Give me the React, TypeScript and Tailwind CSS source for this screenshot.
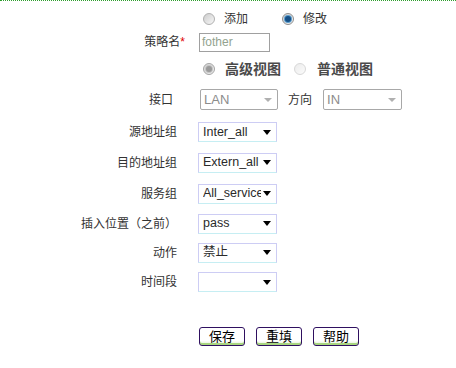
import React from "react";

const font = { fontFamily: '"Liberation Sans", Arial, "Noto Sans CJK SC", sans-serif' };

function Radio({ checked, disabled }: { checked?: boolean; disabled?: boolean }) {
  const ring = disabled
    ? checked
      ? "border-[#a4a4a4] from-[#d6d6d6] to-[#f2f2f2]"
      : "border-[#d8d8d8] from-[#ececec] to-[#fbfbfb]"
    : checked
      ? "border-[#8e8e8e] from-[#cfcfcf] to-[#f6f6f6]"
      : "border-[#b0b0b0] from-[#cdcdcd] to-[#f7f7f7]";
  return (
    <span className={`flex h-[12px] w-[12px] shrink-0 items-center justify-center rounded-full border bg-gradient-to-br ${ring}`}>
      {checked && (
        <span
          className={`h-[6px] w-[6px] rounded-full ${disabled ? "bg-[#9a9a9a] ring-1 ring-[#c4c4c4]" : "bg-[#144f86] ring-1 ring-[#5a9ccc]"}`}
        />
      )}
    </span>
  );
}

function Select({ value, disabled, w = "w-[79px]" }: { value: string; disabled?: boolean; w?: string }) {
  if (disabled) {
    return (
      <div className={`flex h-[21px] ${w} items-center justify-between rounded-[2px] border border-[#a8a8a8] bg-white pl-[3px] pr-[5px] text-[13px] text-[#8c8c8c]`}>
        <span>{value}</span>
        <span className="h-0 w-0 border-x-[4px] border-t-[4px] border-x-transparent border-t-[#b0b0b0]" />
      </div>
    );
  }
  return (
    <div className={`flex h-[20px] ${w} items-center overflow-hidden border border-[#cdcdf4] border-b-[#c6eef3] bg-white pl-[4px] pr-[5px] text-[12.5px] text-[#2a2a2a]`}>
      <span className="min-w-0 flex-1 overflow-hidden whitespace-nowrap">{value}</span>
      <span className="ml-[2px] h-0 w-0 shrink-0 border-x-[4px] border-t-[5px] border-x-transparent border-t-black" />
    </div>
  );
}

function Row({ label, h, value }: { label: string; h: string; value: string }) {
  return (
    <div className={`flex ${h} items-center`}>
      <div className="w-[177px] text-right text-[12px] text-[#333]">{label}</div>
      <div className="ml-[21px]">
        <Select value={value} />
      </div>
    </div>
  );
}

function Btn({ children }: { children: React.ReactNode }) {
  return (
    <button className="flex h-[19px] w-[46px] items-center justify-center rounded-[3px] border border-[#2f1060] bg-gradient-to-b from-white via-white via-75% to-[#dcefc8] text-[13px] leading-none text-black shadow-[inset_0_-2px_0_#a8d680]">
      {children}
    </button>
  );
}

export default function App() {
  return (
    <div className="h-[368px] w-[456px] overflow-hidden bg-white" style={font}>
      <div className="border-t border-dotted border-[#2e9e2e]" />
      <div className="flex flex-col pt-[6px]">
        <div className="flex h-[24px] items-center pl-[203px] text-[12px] text-[#333]">
          <Radio />
          <span className="ml-[9px]">添加</span>
          <span className="ml-[34px]">
            <Radio checked />
          </span>
          <span className="ml-[9px]">修改</span>
        </div>

        <div className="flex h-[22px] items-center">
          <div className="w-[185px] text-right text-[12px] text-[#333]">
            策略名<span className="text-[#e00000]">*</span>
          </div>
          <div className="ml-[14px] flex h-[19px] w-[71px] items-center border border-[#a0a0a0] pl-[2px] text-[12px] text-[#93a38f]">
            fother
          </div>
        </div>

        <div className="flex h-[32px] items-center pl-[203px] text-[14px] font-bold text-[#4a4a4a]">
          <Radio checked disabled />
          <span className="ml-[10px]">高级视图</span>
          <span className="ml-[13px]">
            <Radio disabled />
          </span>
          <span className="ml-[11px]">普通视图</span>
        </div>

        <div className="flex h-[29px] items-center text-[12px] text-[#333]">
          <div className="w-[173px] text-right">接口</div>
          <div className="ml-[27px]">
            <Select value="LAN" disabled w="w-[78px]" />
          </div>
          <div className="ml-[10px]">方向</div>
          <div className="ml-[11px]">
            <Select value="IN" disabled w="w-[79px]" />
          </div>
        </div>

        <div className="mt-[3px]">
          <Row label="源地址组" h="h-[30px]" value="Inter_all" />
          <Row label="目的地址组" h="h-[31px]" value="Extern_all" />
          <Row label="服务组" h="h-[31px]" value="All_service" />
          <Row label="插入位置（之前）" h="h-[29px]" value="pass" />
          <Row label="动作" h="h-[29px]" value="禁止" />
          <Row label="时间段" h="h-[30px]" value="" />
        </div>

        <div className="mt-[30px] flex pl-[199px]">
          <Btn>保存</Btn>
          <span className="ml-[11px]">
            <Btn>重填</Btn>
          </span>
          <span className="ml-[11px]">
            <Btn>帮助</Btn>
          </span>
        </div>
      </div>
    </div>
  );
}
